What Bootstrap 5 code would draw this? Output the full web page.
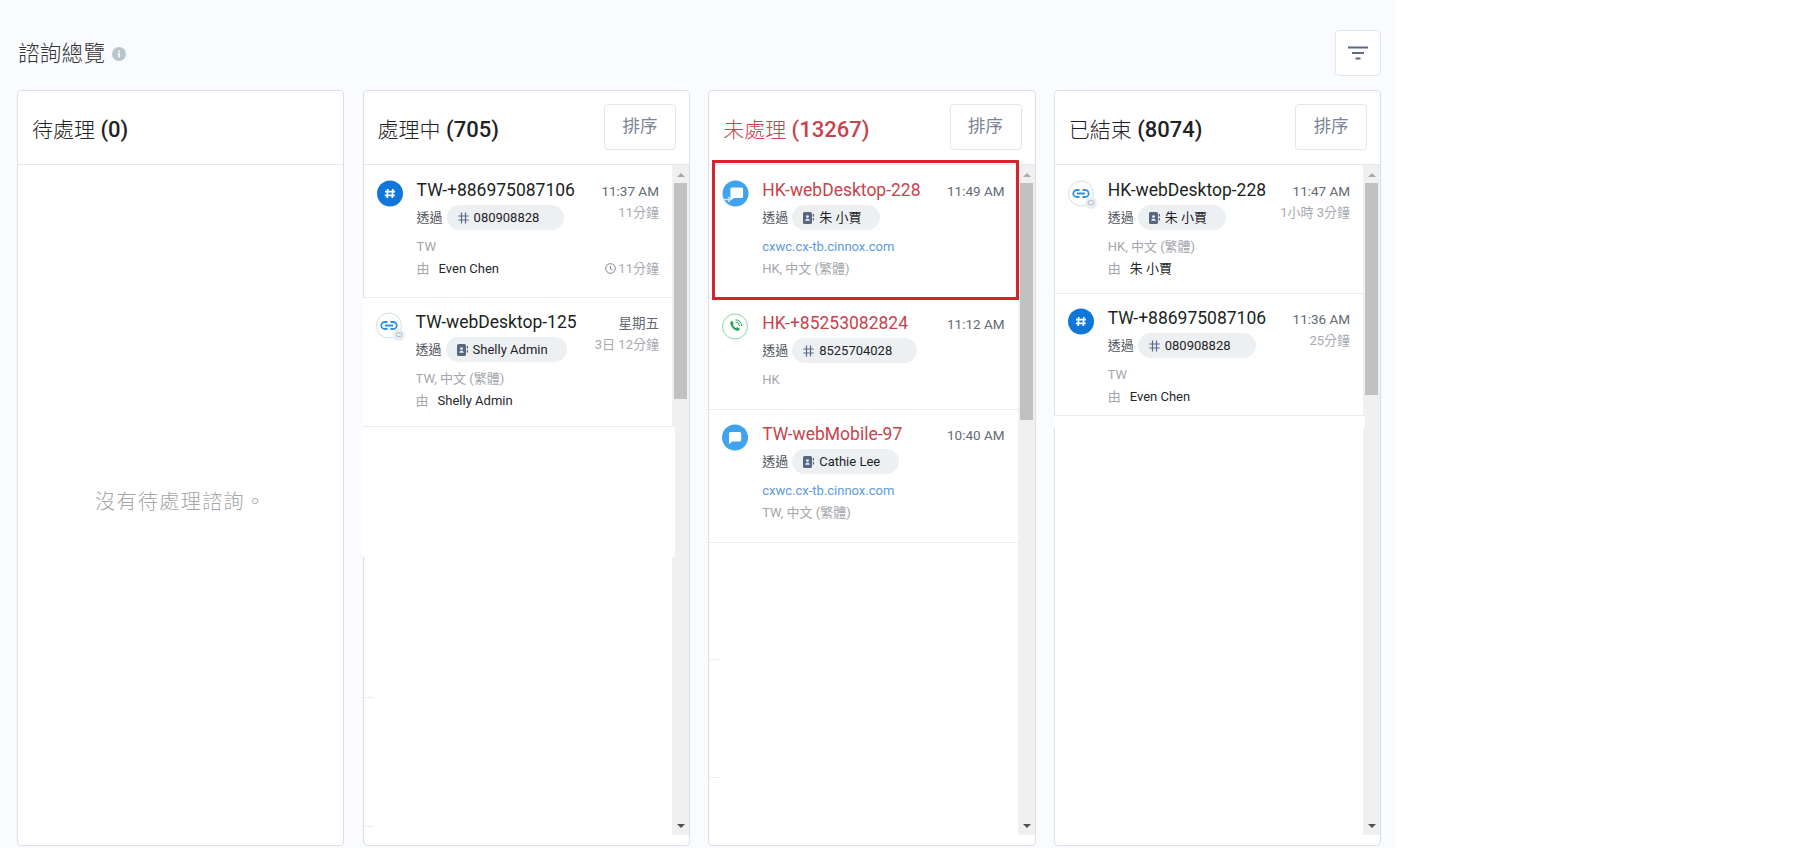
<!DOCTYPE html>
<html lang="zh-Hant">
<head>
<meta charset="utf-8">
<title>諮詢總覽</title>
<link href="https://cdn.jsdelivr.net/npm/bootstrap@5.3.0/dist/css/bootstrap.min.css" rel="stylesheet">
<style>
html,body{height:862px;overflow:hidden;background:#fff;}
body{font-family:Roboto,"Noto Sans CJK TC",sans-serif;color:#1f2226;}
symbol{overflow:visible;}
.board{width:1396px;height:848px;background:#f9fbff;padding:0 15px 0 17px;}
.topline{height:90px;padding:30px 0 14px 1px;}
.page-title{font-size:21.5px;font-weight:300;line-height:47px;color:#333;letter-spacing:.3px;}
.info-dot{width:14px;height:14px;margin-left:7px;margin-top:1px;}
.filter-btn{width:46px;height:46px;padding:0;background:#fff;border:1px solid #e3e6ea;border-radius:4px;}
.cols{display:grid;grid-template-columns:repeat(4,327.4px);column-gap:18.2px;}
.q-card{height:756px;border:1px solid #dcdfe4;border-radius:4px;background:#fff;position:relative;}
.q-head{height:74px;background:#fff;border-bottom:1px solid #e6e8ec;border-radius:4px 4px 0 0!important;padding:13px 13px 0 14px;}
.q-head-title{font-size:22px;font-weight:500;line-height:32px;margin-top:10px;}
.q-head-title .cjk{font-weight:300;font-size:21px;}
.is-red{color:#c9434d;}
.sort-btn{width:72px;height:46px;padding:0 0 2px;background:#fff;color:#7b8494;font-size:17.5px;border:1px solid #e3e6ea;border-radius:4px;}
.q-body{height:670px;}
.empty-msg{font-size:20px;color:#a3a5a8;letter-spacing:1.4px;font-weight:300;margin-top:3px;}
.q-list{width:0;flex:1 1 auto;}
.q-row{padding:15px 13px 0 13px;border:0;border-bottom:1px solid #e8eaee;background:#fff;}
.h135{height:134px;}.h133{height:133px;}.h129{height:129px;}.h111{height:111px;}.h122{height:122px;}
.pt14{padding-top:14px;}
.shift{margin-left:-1px;}
.chan{width:26px;height:27px;flex:0 0 26px;margin-right:14px;overflow:visible;}
.q-main{width:0;flex:1 1 auto;}
.q-name{font-size:17.5px;line-height:20px;color:#1c1f23;white-space:nowrap;}
.q-name.is-red{color:#c9434d;}
.via-line{margin-top:5px;height:25px;font-size:13px;color:#4d5259;}
.pill{height:25px;margin-left:4px;padding:0 19px 0 11px;background:#edf0f3;border-radius:13px;font-size:13px;color:#1f2226;white-space:nowrap;}
.pill.hash-pill{padding-right:25px;}
.pill-ico{width:11px;height:12px;flex:0 0 11px;margin-right:5px;}
.q-time{font-size:13.5px;line-height:22px;color:#636a73;text-align:right;white-space:nowrap;}
.q-ago{color:#a7abb1;font-size:13px;}
.q-meta{font-size:13px;line-height:20px;color:#a3a6ab;margin-top:7px;}
.q-meta + .q-meta{margin-top:2px;}
.q-link{color:#5d9ade;}
.q-by{color:#a3a6ab;margin-right:9px;}
.q-owner{color:#24272b;}
.q-wait{color:#a7abb1;font-size:13px;}
.clock{width:11px;height:11px;margin-right:2px;vertical-align:-1px;}
.bar-track{width:17px;flex:0 0 17px;background:#f0f0f0;position:relative;}
.bar-thumb{position:absolute;left:2px;right:2px;background:#c1c1c1;}
.bar-up,.bar-down{position:absolute;left:5px;width:0;height:0;border-left:4px solid transparent;border-right:4px solid transparent;}
.bar-up{top:8px;border-bottom:4px solid #a9a9a9;}
.bar-down{bottom:7px;border-top:4px solid #505050;}
.ghost{position:relative;}
.ghost::after{content:"";position:absolute;left:0;bottom:0;width:10px;height:1px;background:#ececef;}
.cover{position:relative;z-index:2;background:#fff;margin:0 -3px 0 -2px;height:130px;}
.cover-s{position:relative;z-index:2;background:#fff;margin:0 -2px 0 -1px;height:12px;}
.gh-129{height:129px;}.gh-141{height:141px;}.gh-117{height:117px;}.gh-118{height:118px;}
.red-frame{position:absolute;left:3px;top:69px;width:307px;height:140px;border:3px solid #d8232f;z-index:3;pointer-events:none;}
</style>
</head>
<body>
<svg width="0" height="0" class="position-absolute">
 <defs>
  <symbol id="i-hash" viewBox="0 0 26 27"><circle cx="13" cy="13.500" r="13" fill="#0f77d9"/><path d="M10.700 9 10.200 18M15.800 9 15.300 18M8 11.700H18M7.800 15.300H17.800" stroke="#fff" stroke-width="1.700" fill="none"/></symbol>
  <symbol id="i-link" viewBox="0 0 26 27"><circle cx="13" cy="13.500" r="12.500" fill="#fff" stroke="#cfe2de" stroke-width="1"/><path d="M11.500 10H8.800a3.500 3.500 0 0 0 0 7h2.700M14.500 10h2.700a3.500 3.500 0 0 1 0 7h-2.700M9 13.500h8" stroke="#2f8fe6" stroke-width="1.800" fill="none"/><circle cx="23" cy="23" r="6" fill="#e9edf4"/><rect x="20.300" y="20.800" width="5.400" height="3.800" rx="1" fill="none" stroke="#a9b6c8" stroke-width=".9"/></symbol>
  <symbol id="i-chat" viewBox="0 0 26 27"><circle cx="13" cy="13.500" r="13" fill="#3fa3ee"/><path d="M8.600 8h9a1.600 1.600 0 0 1 1.600 1.600V16a1.600 1.600 0 0 1-1.600 1.600h-7.200L7 20.100V9.600A1.600 1.600 0 0 1 8.600 8z" fill="#fff"/></symbol>
  <symbol id="i-chat-t" viewBox="0 0 26 27"><circle cx="13.500" cy="13.500" r="13" fill="#3fa3ee"/><path d="M10 7.500h9.500a1.600 1.600 0 0 1 1.600 1.600v7.400a1.600 1.600 0 0 1-1.600 1.600H12L8.400 20.500V9.100A1.600 1.600 0 0 1 10 7.500z" fill="#fff"/><path d="M1 19.500h7M6 17l2.500 2.500L6 22" stroke="#cfe8fb" stroke-width="1.300" fill="none"/></symbol>
  <symbol id="i-phone" viewBox="0 0 26 27"><circle cx="13" cy="13.500" r="12.500" fill="#fff" stroke="#86d8a6" stroke-width="1"/><path d="M9.300 8.300c-.8.500-1.200 1.400-1 2.400.7 3.300 3.200 6 6.600 7 1 .3 2-.1 2.500-1l.5-.9-2.800-1.700-1 1c-1.500-.6-2.700-1.900-3.300-3.400l1-1-1.500-2.800z" fill="#22a45a"/><path d="M13.500 9a4 4 0 0 1 4 4M13.500 6.800a6.200 6.200 0 0 1 6.200 6.200" stroke="#22a45a" stroke-width="1" fill="none"/></symbol>
  <symbol id="i-contact" viewBox="0 0 11 12"><rect x="0" y="0" width="9" height="12" rx="1.600" fill="#56677f"/><circle cx="4.500" cy="4.600" r="1.400" fill="#edf0f3"/><path d="M2.200 8.800c.3-1.400 1.200-2 2.300-2s2 .6 2.300 2z" fill="#edf0f3"/><rect x="9.800" y="2" width="1.200" height="2.500" fill="#56677f"/><rect x="9.800" y="6" width="1.200" height="2.500" fill="#56677f"/></symbol>
  <symbol id="i-pillhash" viewBox="0 0 11 12"><path d="M3.500 .5v11M7.500 .5v11M.3 4h10.400M.3 8h10.400" stroke="#5a6b85" stroke-width="1.200" fill="none"/></symbol>
  <symbol id="i-clock" viewBox="0 0 11 11"><circle cx="5.500" cy="5.500" r="4.800" fill="none" stroke="#7c838d" stroke-width="1"/><path d="M5.500 2.800v3l2 1" fill="none" stroke="#7c838d" stroke-width="1"/></symbol>
 </defs>
</svg>
<div class="board">
 <div class="topline d-flex justify-content-between align-items-start">
  <div class="d-flex align-items-center">
   <span class="page-title">諮詢總覽</span>
   <svg class="info-dot" viewBox="0 0 14 14"><circle cx="7" cy="7" r="7" fill="#b9c5cc"/><rect x="6.200" y="6" width="1.600" height="4.500" fill="#fff"/><rect x="6.200" y="3.500" width="1.600" height="1.600" fill="#fff"/></svg>
  </div>
  <button class="btn filter-btn d-flex align-items-center justify-content-center" aria-label="篩選">
   <svg width="20" height="14" viewBox="0 0 20 14"><path d="M0 1.500h20M4 7h12M7.500 12.500h5" stroke="#5f6b80" stroke-width="2"/></svg>
  </button>
 </div>
 <div class="cols">
  <div class="card q-card">
   <div class="card-header q-head"><div class="q-head-title"><span class="cjk">待處理</span> (0)</div></div>
   <div class="q-body d-flex align-items-center justify-content-center"><span class="empty-msg">沒有待處理諮詢。</span></div>
  </div>

  <div class="card q-card">
   <div class="card-header q-head d-flex justify-content-between"><div class="q-head-title"><span class="cjk">處理中</span> (705)</div><button class="btn sort-btn">排序</button></div>
   <div class="q-body d-flex">
    <div class="q-list">
     <div class="q-row h133 d-flex">
      <svg class="chan"><use href="#i-hash"/></svg>
      <div class="q-main">
       <div class="d-flex justify-content-between"><div><div class="q-name">TW-+886975087106</div>
        <div class="via-line d-flex align-items-center">透過<span class="pill hash-pill d-flex align-items-center"><svg class="pill-ico"><use href="#i-pillhash"/></svg>080908828</span></div></div>
        <div class="q-time">11:37 AM<div class="q-ago">11分鐘</div></div></div>
       <div class="q-meta">TW</div>
       <div class="q-meta d-flex justify-content-between"><span><span class="q-by">由</span><span class="q-owner">Even Chen</span></span><span class="q-wait"><svg class="clock"><use href="#i-clock"/></svg>11分鐘</span></div>
      </div>
     </div>
     <div class="q-row h129 pt14 d-flex shift">
      <svg class="chan"><use href="#i-link"/></svg>
      <div class="q-main">
       <div class="d-flex justify-content-between"><div><div class="q-name">TW-webDesktop-125</div>
        <div class="via-line d-flex align-items-center">透過<span class="pill d-flex align-items-center"><svg class="pill-ico"><use href="#i-contact"/></svg>Shelly Admin</span></div></div>
        <div class="q-time">星期五<div class="q-ago">3日 12分鐘</div></div></div>
       <div class="q-meta">TW, 中文 (繁體)</div>
       <div class="q-meta"><span class="q-by">由</span><span class="q-owner">Shelly Admin</span></div>
      </div>
     </div>
     <div class="cover"></div>
     <div class="ghost gh-141"></div>
     <div class="ghost gh-129"></div>
    </div>
    <div class="bar-track"><span class="bar-up"></span><div class="bar-thumb" style="top:18px;height:216px"></div><span class="bar-down"></span></div>
   </div>
  </div>

  <div class="card q-card">
   <div class="card-header q-head d-flex justify-content-between"><div class="q-head-title is-red"><span class="cjk">未處理</span> (13267)</div><button class="btn sort-btn">排序</button></div>
   <div class="q-body d-flex">
    <div class="q-list">
     <div class="q-row h135 d-flex">
      <svg class="chan"><use href="#i-chat-t"/></svg>
      <div class="q-main">
       <div class="d-flex justify-content-between"><div><div class="q-name is-red">HK-webDesktop-228</div>
        <div class="via-line d-flex align-items-center">透過<span class="pill d-flex align-items-center"><svg class="pill-ico"><use href="#i-contact"/></svg>朱 小賈</span></div></div>
        <div class="q-time">11:49 AM</div></div>
       <div class="q-meta q-link">cxwc.cx-tb.cinnox.com</div>
       <div class="q-meta">HK, 中文 (繁體)</div>
      </div>
     </div>
     <div class="q-row h111 pt14 d-flex">
      <svg class="chan"><use href="#i-phone"/></svg>
      <div class="q-main">
       <div class="d-flex justify-content-between"><div><div class="q-name is-red">HK-+85253082824</div>
        <div class="via-line d-flex align-items-center">透過<span class="pill hash-pill d-flex align-items-center"><svg class="pill-ico"><use href="#i-pillhash"/></svg>8525704028</span></div></div>
        <div class="q-time">11:12 AM</div></div>
       <div class="q-meta">HK</div>
      </div>
     </div>
     <div class="q-row h133 pt14 d-flex">
      <svg class="chan"><use href="#i-chat"/></svg>
      <div class="q-main">
       <div class="d-flex justify-content-between"><div><div class="q-name is-red">TW-webMobile-97</div>
        <div class="via-line d-flex align-items-center">透過<span class="pill d-flex align-items-center"><svg class="pill-ico"><use href="#i-contact"/></svg>Cathie Lee</span></div></div>
        <div class="q-time">10:40 AM</div></div>
       <div class="q-meta q-link">cxwc.cx-tb.cinnox.com</div>
       <div class="q-meta">TW, 中文 (繁體)</div>
      </div>
     </div>
     <div class="ghost gh-117"></div>
     <div class="ghost gh-118"></div>
    </div>
    <div class="bar-track"><span class="bar-up"></span><div class="bar-thumb" style="top:18px;height:237px"></div><span class="bar-down"></span></div>
   </div>
   <div class="red-frame"></div>
  </div>

  <div class="card q-card">
   <div class="card-header q-head d-flex justify-content-between"><div class="q-head-title"><span class="cjk">已結束</span> (8074)</div><button class="btn sort-btn">排序</button></div>
   <div class="q-body d-flex">
    <div class="q-list">
     <div class="q-row h129 d-flex">
      <svg class="chan"><use href="#i-link"/></svg>
      <div class="q-main">
       <div class="d-flex justify-content-between"><div><div class="q-name">HK-webDesktop-228</div>
        <div class="via-line d-flex align-items-center">透過<span class="pill d-flex align-items-center"><svg class="pill-ico"><use href="#i-contact"/></svg>朱 小賈</span></div></div>
        <div class="q-time">11:47 AM<div class="q-ago">1小時 3分鐘</div></div></div>
       <div class="q-meta">HK, 中文 (繁體)</div>
       <div class="q-meta"><span class="q-by">由</span><span class="q-owner">朱 小賈</span></div>
      </div>
     </div>
     <div class="q-row h122 pt14 d-flex">
      <svg class="chan"><use href="#i-hash"/></svg>
      <div class="q-main">
       <div class="d-flex justify-content-between"><div><div class="q-name">TW-+886975087106</div>
        <div class="via-line d-flex align-items-center">透過<span class="pill hash-pill d-flex align-items-center"><svg class="pill-ico"><use href="#i-pillhash"/></svg>080908828</span></div></div>
        <div class="q-time">11:36 AM<div class="q-ago">25分鐘</div></div></div>
       <div class="q-meta">TW</div>
       <div class="q-meta"><span class="q-by">由</span><span class="q-owner">Even Chen</span></div>
      </div>
     </div>
     <div class="cover-s"></div>
    </div>
    <div class="bar-track"><span class="bar-up"></span><div class="bar-thumb" style="top:18px;height:212px"></div><span class="bar-down"></span></div>
   </div>
  </div>
 </div>
</div>
</body>
</html>
